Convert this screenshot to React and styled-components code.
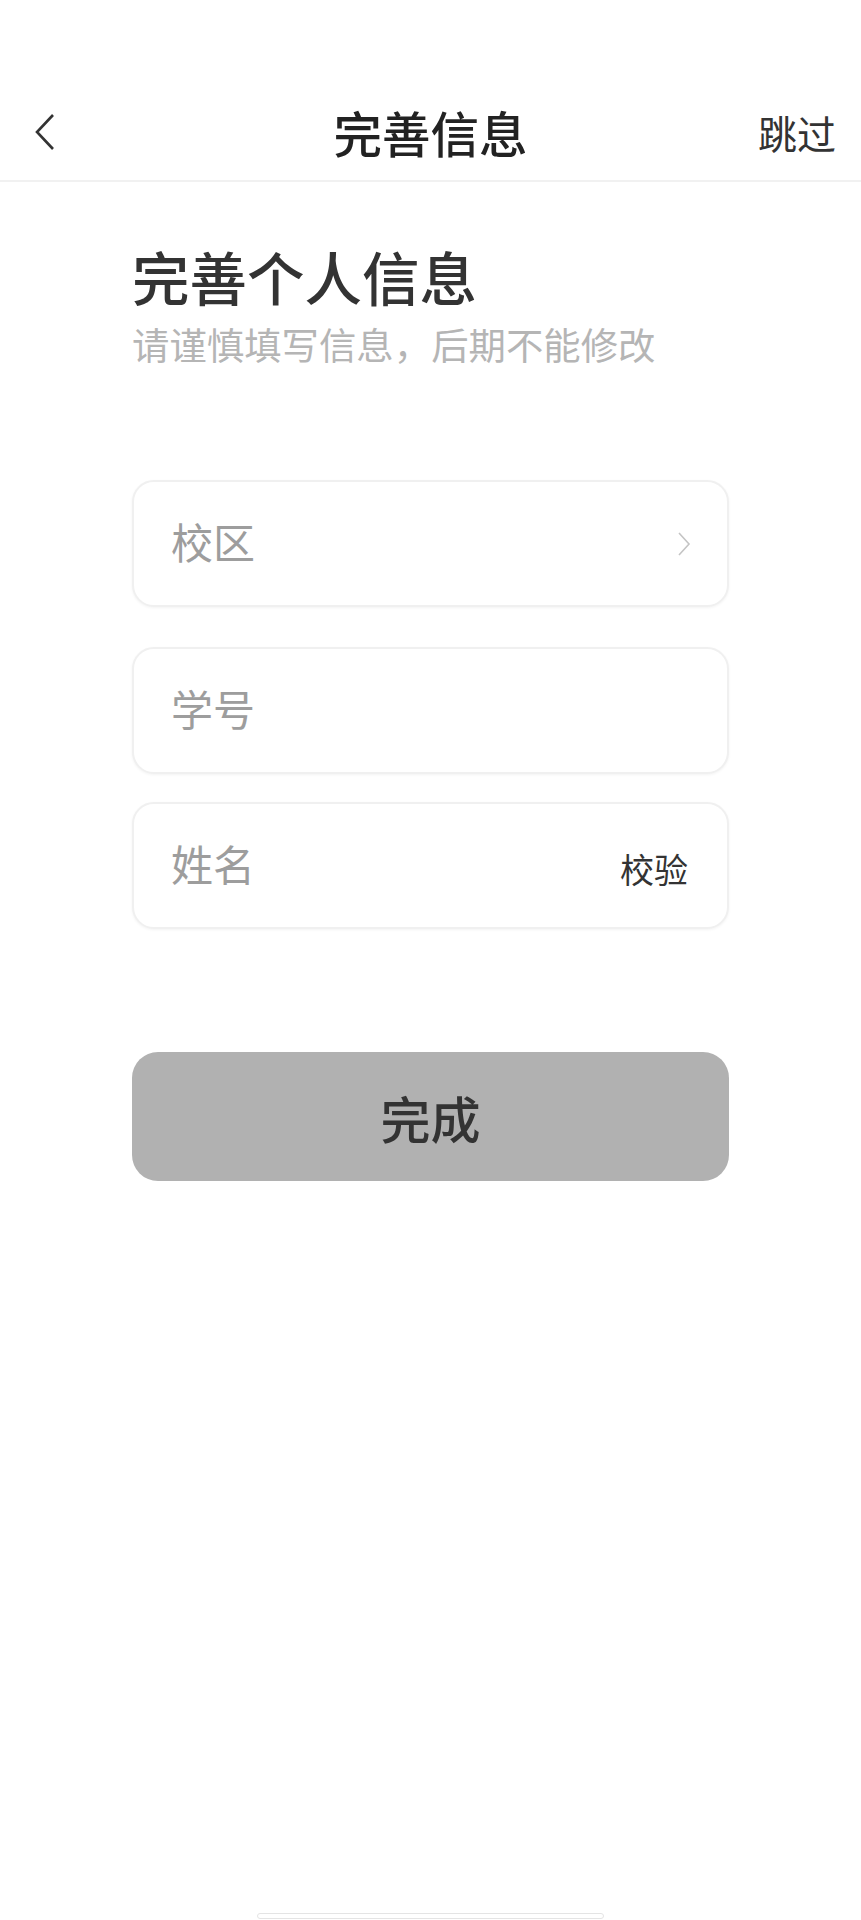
import React from 'react';
import styled, { createGlobalStyle } from 'styled-components';

const GlobalStyle = createGlobalStyle`
    body {
        margin: 0;
        background: #ffffff;
        font-family: "Noto Sans CJK SC", "Noto Sans", sans-serif;
    }
`

const fields = [
    { label: '校区', offset: 0, arrow: true },
    { label: '学号', offset: 40 },
    { label: '姓名', offset: 28, action: '校验' },
]

const App = () => {
    return (
        <Page>
            <GlobalStyle />
            <NavBar>
                <BackBtn>
                    <svg width="22" height="38" viewBox="0 0 22 38" fill="none">
                        <polyline points="19,2 3,19 19,36" stroke="#333" strokeWidth="2.6" strokeLinejoin="miter" />
                    </svg>
                </BackBtn>
                <NavTitle>完善信息</NavTitle>
                <SkipBtn>跳过</SkipBtn>
            </NavBar>

            <Content>
                <Heading>完善个人信息</Heading>
                <SubTitle>请谨慎填写信息，后期不能修改</SubTitle>

                <FieldList>
                    {fields.map(f => (
                        <Field key={f.label} $offset={f.offset}>
                            <Placeholder>{f.label}</Placeholder>
                            {f.arrow && (
                                <svg width="14" height="26" viewBox="0 0 14 26" fill="none">
                                    <polyline points="2,2 12,13 2,24" stroke="#c4c4c4" strokeWidth="1.6" />
                                </svg>
                            )}
                            {f.action && <Action>{f.action}</Action>}
                        </Field>
                    ))}
                </FieldList>

                <SubmitBtn>完成</SubmitBtn>
            </Content>

            <HomeIndicator />
        </Page>
    )
}

export default App

const Page = styled.div`
    width: 861px;
    min-height: 1920px;
    display: flex;
    flex-direction: column;
    background: #fff;
`
const NavBar = styled.div`
    display: grid;
    grid-template-columns: 1fr auto 1fr;
    align-items: center;
    height: 96px;
    margin-top: 84px;
    padding: 0 25px;
    border-bottom: 2px solid #f1f1f1;
`
const BackBtn = styled.div`
    display: flex;
    align-items: center;
    justify-self: start;
    margin-left: 9px;
    cursor: pointer;
`
const NavTitle = styled.h1`
    margin: 0;
    font-size: 48.5px;
    font-weight: 500;
    color: #222;
    line-height: 1;
`
const SkipBtn = styled.div`
    justify-self: end;
    font-size: 39px;
    color: #333;
    line-height: 1;
    cursor: pointer;
`
const Content = styled.div`
    display: flex;
    flex-direction: column;
    padding: 0 132px;
`
const Heading = styled.h2`
    margin: 59px 0 0 0;
    font-size: 57.5px;
    font-weight: 500;
    line-height: 70px;
    color: #333;
`
const SubTitle = styled.p`
    margin: 9px 0 0 0;
    font-size: 37.4px;
    line-height: 48px;
    color: #b5b5b5;
`
const FieldList = styled.div`
    display: flex;
    flex-direction: column;
    margin-top: 112px;
`
const Field = styled.div`
    display: flex;
    align-items: center;
    justify-content: space-between;
    box-sizing: border-box;
    height: 127px;
    margin-top: ${ props => props.$offset }px;
    padding: 0 36px 0 37px;
    border: 2px solid #f0f0f0;
    border-radius: 22px;
    box-shadow: 0 1px 3px rgba(0, 0, 0, 0.05);
    background: #fff;
`
const Placeholder = styled.span`
    font-size: 42px;
    color: #9d9d9d;
    line-height: 1;
    margin-top: -6px;
`
const Action = styled.span`
    font-size: 34px;
    color: #333;
    line-height: 1;
    margin: 6px 3px 0 0;
`
const SubmitBtn = styled.button`
    margin-top: 123px;
    height: 129px;
    border: none;
    border-radius: 26px;
    background: #b1b1b1;
    color: #333;
    font-family: inherit;
    font-size: 50px;
    font-weight: 500;
    cursor: pointer;
`
const HomeIndicator = styled.div`
    align-self: center;
    margin-top: auto;
    margin-bottom: 1px;
    width: 347px;
    height: 6px;
    border: 1px solid #e4e4e4;
    border-radius: 4px;
    box-sizing: border-box;
`
